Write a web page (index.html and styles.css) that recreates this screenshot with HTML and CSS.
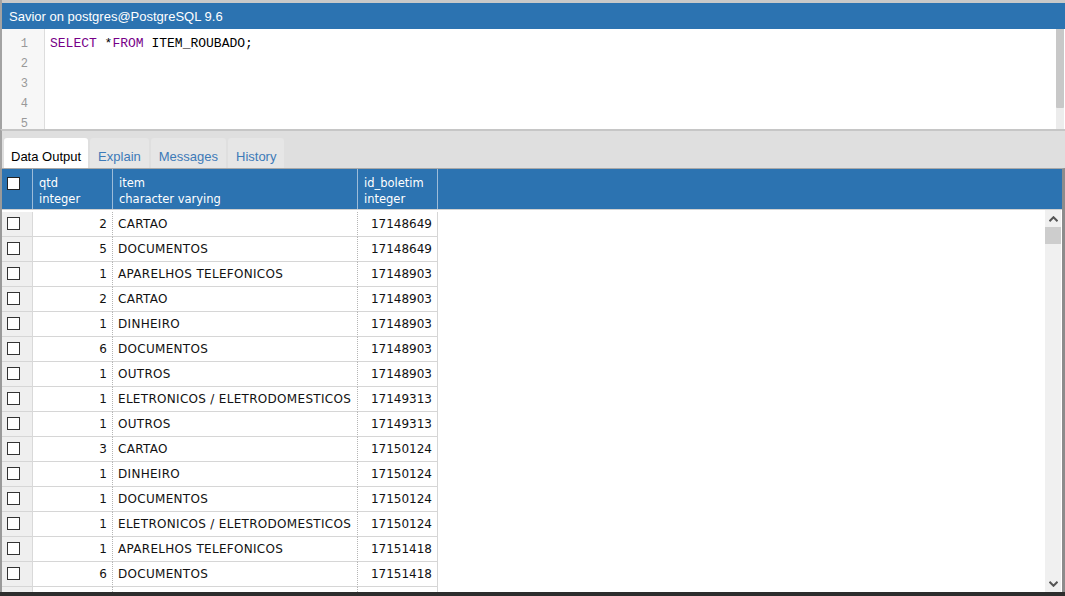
FILE: index.html
```html
<!DOCTYPE html>
<html>
<head>
<meta charset="utf-8">
<link rel="stylesheet" href="styles.css">
</head>
<body>
<div class="window">
  <div class="topstrip"></div>
  <div class="titlebar">Savior on postgres@PostgreSQL 9.6</div>
  <div class="editor">
    <div class="gutter">
      <div class="ln">1</div><div class="ln">2</div><div class="ln">3</div><div class="ln">4</div><div class="ln">5</div>
    </div>
    <div class="code">
      <div class="line"><span class="kw">SELECT</span> *<span class="kw">FROM</span> ITEM_ROUBADO;</div>
    </div>
    <div class="vscroll"><div class="vthumb"></div></div>
  </div>
  <div class="tabstrip">
    <div class="tab active">Data Output</div>
    <div class="tab">Explain</div>
    <div class="tab">Messages</div>
    <div class="tab">History</div>
  </div>
  <div class="grid">
    <div class="ghead">
      <div class="hc c0"><span class="cb hcb"></span></div>
      <div class="hc c1">qtd<br>integer</div>
      <div class="hc c2">item<br>character varying</div>
      <div class="hc c3">id_boletim<br>integer</div>
      <div class="hc cfill"></div>
    </div>
    <div class="gbody">
      <div class="rows">
        <div class="row"><div class="c0"><span class="cb"></span></div><div class="c1 num">2</div><div class="c2">CARTAO</div><div class="c3 num">17148649</div></div>
        <div class="row"><div class="c0"><span class="cb"></span></div><div class="c1 num">5</div><div class="c2">DOCUMENTOS</div><div class="c3 num">17148649</div></div>
        <div class="row"><div class="c0"><span class="cb"></span></div><div class="c1 num">1</div><div class="c2">APARELHOS TELEFONICOS</div><div class="c3 num">17148903</div></div>
        <div class="row"><div class="c0"><span class="cb"></span></div><div class="c1 num">2</div><div class="c2">CARTAO</div><div class="c3 num">17148903</div></div>
        <div class="row"><div class="c0"><span class="cb"></span></div><div class="c1 num">1</div><div class="c2">DINHEIRO</div><div class="c3 num">17148903</div></div>
        <div class="row"><div class="c0"><span class="cb"></span></div><div class="c1 num">6</div><div class="c2">DOCUMENTOS</div><div class="c3 num">17148903</div></div>
        <div class="row"><div class="c0"><span class="cb"></span></div><div class="c1 num">1</div><div class="c2">OUTROS</div><div class="c3 num">17148903</div></div>
        <div class="row"><div class="c0"><span class="cb"></span></div><div class="c1 num">1</div><div class="c2">ELETRONICOS / ELETRODOMESTICOS</div><div class="c3 num">17149313</div></div>
        <div class="row"><div class="c0"><span class="cb"></span></div><div class="c1 num">1</div><div class="c2">OUTROS</div><div class="c3 num">17149313</div></div>
        <div class="row"><div class="c0"><span class="cb"></span></div><div class="c1 num">3</div><div class="c2">CARTAO</div><div class="c3 num">17150124</div></div>
        <div class="row"><div class="c0"><span class="cb"></span></div><div class="c1 num">1</div><div class="c2">DINHEIRO</div><div class="c3 num">17150124</div></div>
        <div class="row"><div class="c0"><span class="cb"></span></div><div class="c1 num">1</div><div class="c2">DOCUMENTOS</div><div class="c3 num">17150124</div></div>
        <div class="row"><div class="c0"><span class="cb"></span></div><div class="c1 num">1</div><div class="c2">ELETRONICOS / ELETRODOMESTICOS</div><div class="c3 num">17150124</div></div>
        <div class="row"><div class="c0"><span class="cb"></span></div><div class="c1 num">1</div><div class="c2">APARELHOS TELEFONICOS</div><div class="c3 num">17151418</div></div>
        <div class="row"><div class="c0"><span class="cb"></span></div><div class="c1 num">6</div><div class="c2">DOCUMENTOS</div><div class="c3 num">17151418</div></div>
        <div class="row"><div class="c0"></div><div class="c1 num"></div><div class="c2"></div><div class="c3 num"></div></div>
      </div>
      <div class="gscroll">
        <div class="arrow">
          <svg width="9" height="6" viewBox="0 0 9 6"><path d="M0.5 5.2 L4.5 1.2 L8.5 5.2" fill="none" stroke="#555" stroke-width="2"/></svg>
        </div>
        <div class="gthumb"></div>
        <div class="gtrack"></div>
        <div class="arrow">
          <svg width="9" height="6" viewBox="0 0 9 6"><path d="M0.5 0.8 L4.5 4.8 L8.5 0.8" fill="none" stroke="#555" stroke-width="2"/></svg>
        </div>
      </div>
    </div>
  </div>
  <div class="bottombar"></div>
</div>
</body>
</html>
```
FILE: styles.css
```css
html, body {
  margin: 0;
  padding: 0;
  background: #dfdfdf;
}
.window {
  width: 1065px;
  height: 596px;
  display: flex;
  flex-direction: column;
  overflow: hidden;
  font-family: "Liberation Sans", Arial, sans-serif;
}
.topstrip {
  height: 3px;
  background: #c9c9c9;
  border-left: 2px solid #a3a3a3;
}
.titlebar {
  height: 26px;
  line-height: 27px;
  background: #2c73b1;
  color: #fff;
  font-size: 13px;
  padding-left: 7px;
  border-left: 2px solid #a3a3a3;
  box-sizing: border-box;
}
.editor {
  height: 100px;
  display: flex;
  background: #fff;
  border-left: 2px solid #a3a3a3;
  overflow: hidden;
}
.gutter {
  width: 42px;
  background: #f7f7f7;
  border-right: 1px solid #dddddd;
  padding-top: 5px;
  flex: none;
}
.ln {
  height: 20px;
  line-height: 20px;
  text-align: right;
  padding-right: 16px;
  color: #999;
  font-family: "Liberation Mono", "Courier New", monospace;
  font-size: 12px;
}
.code {
  flex: 1;
  padding-top: 5px;
  padding-left: 5px;
}
.line {
  height: 20px;
  line-height: 20px;
  font-family: "Liberation Mono", "Courier New", monospace;
  font-size: 13px;
  color: #000;
  white-space: pre;
}
.kw {
  color: #770088;
}
.vscroll {
  width: 8px;
  background: #ececec;
  margin-right: 1px;
  display: flex;
  flex-direction: column;
}
.vthumb {
  height: 79px;
  background: #c8c8c8;
  border-radius: 0 0 1px 1px;
}
.tabstrip {
  height: 39px;
  border-top: 2px solid #c6c6c6;
  background: #dfdfdf;
  display: flex;
  align-items: flex-end;
  gap: 2px;
  padding-left: 2px;
  box-sizing: border-box;
  border-left: 2px solid #a3a3a3;
}
.tab {
  height: 30px;
  line-height: 37px;
  padding: 0 8px;
  font-size: 13px;
  color: #3d7ab8;
  background: #e6e6e6;
  border-radius: 3px 3px 0 0;
  box-sizing: border-box;
}
.tab.active {
  background: #fff;
  color: #000;
  padding: 0 7px 0 7px;
}
.grid {
  flex: 1;
  display: flex;
  flex-direction: column;
  border-left: 2px solid #9a9a9a;
  border-right: 3px solid #8c8c8c;
  border-top: 1px solid #a8a8a8;
  background: #fff;
  min-height: 0;
}
.ghead {
  height: 41px;
  display: flex;
  background: #2c73b1;
  color: #fff;
  font-family: "DejaVu Sans", Verdana, sans-serif;
  font-size: 11.5px;
  line-height: 16px;
  border-bottom: 1px solid #d0d0d0;
  box-sizing: border-box;
  flex: none;
}
.hc {
  box-sizing: border-box;
  border-right: 1px solid #9dbcd9;
  padding: 6px 6px 0 6px;
}
.hc.cfill {
  flex: 1;
  border-right: 1px solid #2c73b1;
}
.c0 { width: 31px; flex: none; box-sizing: border-box; }
.c1 { width: 80px; flex: none; box-sizing: border-box; }
.c2 { width: 245px; flex: none; box-sizing: border-box; }
.c3 { width: 80px; flex: none; box-sizing: border-box; }
.hc.c0 {
  padding: 8px 0 0 5px;
}
.cb {
  display: block;
  width: 13px;
  height: 13px;
  box-sizing: border-box;
  border: 1px solid #333;
  background: #fff;
}
.hcb {
  border-color: #222;
}
.gbody {
  flex: 1;
  display: flex;
  min-height: 0;
  overflow: hidden;
}
.rows {
  flex: 1;
  overflow: hidden;
  padding-top: 2px;
}
.row {
  display: flex;
  height: 25px;
  font-family: "DejaVu Sans", Verdana, sans-serif;
  font-size: 12px;
  color: #111;
}
.row > div {
  border-bottom: 1px solid #d6d6d6;
  line-height: 24px;
  white-space: nowrap;
  overflow: hidden;
}
.row .c0 {
  background: #efefef;
  border-right: 1px solid #d9d9d9;
  padding: 5px 0 0 5px;
}
.row .c1 {
  border-right: 1px dotted #b5b5b5;
  padding-right: 5px;
}
.row .c2 {
  border-right: 1px dotted #b5b5b5;
  padding-left: 5px;
  letter-spacing: 0.3px;
}
.row .c3 {
  border-right: 1px solid #d6d6d6;
  padding-right: 5px;
}
.num {
  text-align: right;
}
.gscroll {
  width: 16px;
  background: #f0f0f0;
  margin-right: 1px;
  display: flex;
  flex-direction: column;
  flex: none;
}
.arrow {
  height: 17px;
  display: flex;
  align-items: center;
  justify-content: center;
}
.gthumb {
  height: 17px;
  background: #cdcdcd;
}
.gtrack {
  flex: 1;
}
.bottombar {
  height: 4px;
  background: #2d2d2d;
  flex: none;
}
```
